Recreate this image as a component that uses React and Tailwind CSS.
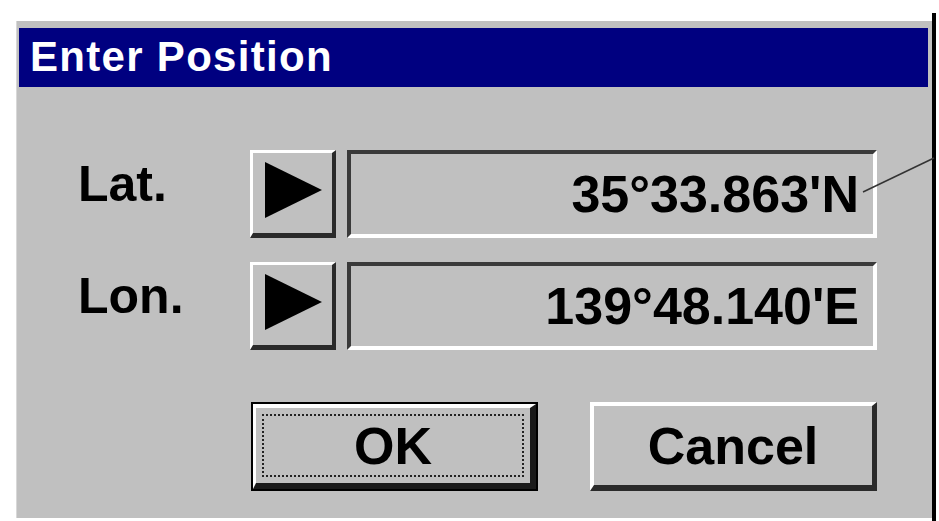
const font = { fontFamily: '"Liberation Sans", Arial, sans-serif' };

// Small raised square button with a right-pointing arrow
const ArrowButton = () => (
  <button
    type="button"
    className="w-[86px] h-[88px] flex items-center justify-center bg-[#c0c0c0] border-t-[3px] border-l-[3px] border-t-white border-l-white border-b-[5px] border-r-[4px] border-b-[#2a2a2a] border-r-[#2a2a2a]"
  >
    <svg width="57" height="56" viewBox="0 0 57 56" className="-mt-[6px] ml-[1px]">
      <polygon points="0,0 57,28 0,56" fill="#000" />
    </svg>
  </button>
);

// Sunken read-only value box
const ValueField = ({ value }) => (
  <div className="ml-[11px] w-[530px] h-[88px] flex items-center justify-end pr-[14px] bg-[#c0c0c0] border-t-[4px] border-l-[4px] border-t-[#3a3a3a] border-l-[#3a3a3a] border-b-[4px] border-r-[4px] border-b-white border-r-white">
    <span className="text-[52px] leading-none font-bold text-black" style={font}>
      {value}
    </span>
  </div>
);

const PositionRow = ({ label, value }) => (
  <div className="flex items-start">
    <div className="w-[172px] pt-[9px] text-[50px] leading-none font-bold text-black" style={font}>
      {label}
    </div>
    <ArrowButton />
    <ValueField value={value} />
  </div>
);

const App = () => {
  return (
    <div className="relative w-[939px] h-[521px] bg-white flex overflow-hidden">
      <div className="ml-[16px] mt-[21px] w-[916px] h-[497px] bg-[#c0c0c0] flex flex-col pt-[7px] pl-[2px] pr-[4px] border-l border-l-[#d8d8d8]">
        {/* title bar */}
        <div className="h-[59px] bg-[#000080] flex items-center pl-[11px] pb-[2px]">
          <span className="text-white text-[42px] leading-none font-bold tracking-[1.3px]" style={font}>
            Enter Position
          </span>
        </div>

        <div className="flex flex-col pl-[59px] pt-[63px]">
          <PositionRow label="Lat." value={"35°33.863'N"} />
          <div className="mt-[24px]">
            <PositionRow label="Lon." value={"139°48.140'E"} />
          </div>

          <div className="flex mt-[52px] pl-[173px] gap-[52px]">
            {/* default button: black frame + focus rectangle */}
            <button
              type="button"
              className="w-[287px] h-[89px] border-[2px] border-black bg-[#c0c0c0]"
            >
              <div className="w-full h-full border-t-[4px] border-l-[3px] border-t-white border-l-white border-b-[6px] border-r-[6px] border-b-[#1a1a1a] border-r-[#1a1a1a] p-[6px]">
                <div className="w-full h-full border-[2px] border-dotted border-[#222] flex items-center justify-center">
                  <span className="text-[52px] leading-none font-bold text-black" style={font}>
                    OK
                  </span>
                </div>
              </div>
            </button>
            <button
              type="button"
              className="w-[287px] h-[89px] bg-[#c0c0c0] flex items-center justify-center border-t-[4px] border-l-[4px] border-t-white border-l-white border-b-[6px] border-r-[5px] border-b-[#2a2a2a] border-r-[#2a2a2a]"
            >
              <span className="text-[52px] leading-none font-bold text-black" style={font}>
                Cancel
              </span>
            </button>
          </div>
        </div>
      </div>
      <div className="mt-[13px] w-[4px] h-[508px] bg-black" />

      {/* leader line from the latitude value */}
      <svg className="absolute left-0 top-0 pointer-events-none" width="939" height="521">
        <line x1="863" y1="192" x2="934" y2="158" stroke="#333" strokeWidth="1.5" />
      </svg>
    </div>
  );
};

export default App;
